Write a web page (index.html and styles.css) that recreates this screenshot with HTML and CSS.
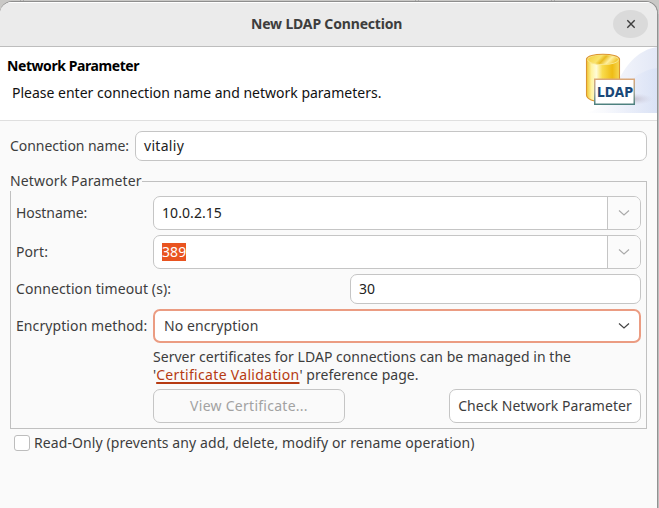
FILE: index.html
```html
<!DOCTYPE html>
<html lang="en">
<head>
<meta charset="utf-8">
<title>New LDAP Connection</title>
<link rel="stylesheet" href="styles.css">
</head>
<body>
<div class="backdrop"><i class="tab-edge tab-edge-a"></i><i class="tab-edge tab-edge-b"></i><i class="tab-edge tab-edge-c"></i></div>
<main class="dialog">
  <header class="titlebar">
    <h1 class="title">New LDAP Connection</h1>
    <button class="close" aria-label="Close"><svg width="10" height="10" viewBox="0 0 10 10"><path d="M1.3 1.3 8.7 8.7M8.7 1.3 1.3 8.7" fill="none" stroke="#3d3d3d" stroke-width="1.4"/></svg></button>
  </header>
  <section class="banner">
    <div class="banner-text">
      <h2>Network Parameter</h2>
      <p>Please enter connection name and network parameters.</p>
    </div>
    <svg class="logo" width="75" height="66" viewBox="0 0 75 66">
      <defs>
        <linearGradient id="sky" x1="0" x2="1"><stop offset="0" stop-color="#fff"/><stop offset="1" stop-color="#e3e8f6"/></linearGradient>
        <linearGradient id="sky2" x1="0" x2="1"><stop offset="0" stop-color="#f8f9fd"/><stop offset="1" stop-color="#d6dff5"/></linearGradient>
        <linearGradient id="gold" x1="0" x2="1"><stop offset="0" stop-color="#efc52f"/><stop offset=".15" stop-color="#fff3a0"/><stop offset=".3" stop-color="#fffbd8"/><stop offset=".48" stop-color="#f9dc4e"/><stop offset=".78" stop-color="#efbc14"/><stop offset="1" stop-color="#f6d957"/></linearGradient>
        <linearGradient id="lid" x1="0" x2="1" y2=".3"><stop offset="0" stop-color="#f3cd35"/><stop offset=".45" stop-color="#f9e36d"/><stop offset=".6" stop-color="#e9bb20"/><stop offset=".8" stop-color="#fff0a0"/><stop offset="1" stop-color="#f2ca3a"/></linearGradient>
        <linearGradient id="frame" y2="1" x2="0"><stop offset="0" stop-color="#dba878"/><stop offset=".5" stop-color="#a8a99a"/><stop offset="1" stop-color="#4d817f"/></linearGradient>
        <radialGradient id="shade"><stop offset="0" stop-color="#a99dab" stop-opacity=".6"/><stop offset="1" stop-color="#c9c5d7" stop-opacity="0"/></radialGradient>
      </defs>
      <path d="M36 34C46 15 57 3 75 0v66H4C20 62 30 51 36 34Z" fill="url(#sky)"/>
      <path d="M22 66C40 40 53 24 75 21v45Z" fill="url(#sky2)" opacity=".7"/>
      <ellipse cx="50" cy="52" rx="21" ry="6" fill="url(#shade)"/>
      <path d="M4.500 12v36c0 4 7 7 16 7s17-3 17-7V12Z" fill="url(#gold)" stroke="#dc9530" stroke-width="1.1"/>
      <ellipse cx="21" cy="12.600" rx="15.600" ry="5" fill="url(#lid)" stroke="#f9e78d"/>
      <path d="M4.500 12.500c0-7 33-7 33 0" fill="none" stroke="#dc9530" stroke-width="1.1"/>
      <rect x="12.750" y="32.250" width="39.500" height="25" fill="#fff" stroke="url(#frame)" stroke-width="1.5"/>
      <text class="logo-text" x="15" y="49.800" textLength="36" lengthAdjust="spacingAndGlyphs">LDAP</text>
    </svg>
  </section>
  <form class="content">
    <div class="name-row"><label class="name-label">Connection name:</label><div class="field name-field">vitaliy</div></div>
    <fieldset class="group">
      <legend>Network Parameter</legend>
      <div class="rows">
        <div class="row"><label class="snug">Hostname:</label><div class="field combo"><span class="value">10.0.2.15</span><span class="drop"><svg width="12" height="8" viewBox="0 0 12 8"><path d="M1 1.5 6 6 11 1.5" fill="none" stroke="#aaa" stroke-width="1.1"/></svg></span></div></div>
        <div class="row"><label>Port:</label><div class="field combo"><span class="value"><span class="selected">389</span></span><span class="drop"><svg width="12" height="8" viewBox="0 0 12 8"><path d="M1 1.5 6 6 11 1.5" fill="none" stroke="#aaa" stroke-width="1.1"/></svg></span></div></div>
        <div class="row timeout"><label>Connection timeout (s):</label><div class="field">30</div></div>
        <div class="row"><label>Encryption method:</label><div class="field select"><span>No encryption</span><svg width="12" height="8" viewBox="0 0 12 8"><path d="M1 1.5 6 6 11 1.5" fill="none" stroke="#444" stroke-width="1.2"/></svg></div></div>
      </div>
      <p class="hint">Server certificates for LDAP connections can be managed in the<br>'<a class="link">Certificate Validation</a>' preference page.</p>
      <div class="actions"><button type="button" class="button disabled">View Certificate...</button><button type="button" class="button">Check Network Parameter</button></div>
    </fieldset>
    <label class="readonly"><span class="checkbox"></span>Read-Only (prevents any add, delete, modify or rename operation)</label>
  </form>
</main>
</body>
</html>
```
FILE: styles.css
```css
* { box-sizing: border-box; }
body { margin: 0; padding-top: 2px; height: 508px; overflow: hidden; background: #bdbdbd; color: #3d3d3d; font: 14px/18px "Noto Sans", sans-serif; position: relative; white-space: nowrap; }
h1, h2, p { margin: 0; font-size: inherit; }
button { font: inherit; color: inherit; padding: 0; }

.backdrop { position: absolute; inset: 0 0 auto 0; height: 14px; background: #c9c8c6; }
.tab-edge { position: absolute; top: 0; width: 4px; height: 2px; border: solid #aaa; border-width: 0 1px; }
.tab-edge-a { left: 20px; }
.tab-edge-b { left: 415px; }
.tab-edge-c { left: 551px; }

.dialog { position: relative; width: 658px; height: 506px; background: #fafafa; border-right: 1px solid #929292; box-shadow: 0 -1px 0 #8e8e8e; border-radius: 12px 12px 0 0; overflow: hidden; }
.titlebar { display: flex; align-items: center; height: 45px; background: #ebebeb; border-top: 1px solid #fff; border-bottom: 1px solid #bdbdbd; }
.title { flex: 1; padding: 0 0 2px 251px; font-weight: 700; letter-spacing: -.17px; }
.close { display: flex; align-items: center; justify-content: center; width: 35px; height: 28px; margin: 0 9px 1px 0; border: 0; border-radius: 50%; background: #dadada; }

.banner { display: flex; justify-content: space-between; height: 74px; background: #fff; border-bottom: 1px solid #dfdfdf; color: #111; }
.banner-text { padding-top: 10px; }
.banner h2 { padding-left: 7px; color: #000; letter-spacing: -.42px; }
.banner p { padding: 9px 0 0 12px; }
.logo-text { font: 700 14px "DejaVu Sans", sans-serif; fill: #194878; }

.content { padding: 10px 10px 0 10px; }
.name-row { display: flex; align-items: center; justify-content: space-between; height: 30px; }
.name-label, .snug { letter-spacing: -.06px; }
.field { display: flex; align-items: center; height: 30px; background: #fff; border: 1px solid #c5c5c5; border-radius: 7px; padding-left: 8px; color: #222; }
.name-field { width: 512px; letter-spacing: .3px; }

.group { position: relative; min-width: 0; height: 257px; margin: 11px 0 0; padding: 0 5px; border: 1px solid #c0c0c0; }
legend { height: 19px; padding: 0; margin-left: -6px; background: #fafafa; letter-spacing: .14px; }
.rows { display: grid; gap: 5px; padding-top: 5px; }
.row { display: flex; align-items: center; justify-content: space-between; }
.row label:not(.snug) { letter-spacing: .09px; }
.row .field { width: 488px; height: 34px; }
.row.timeout .field { width: 291px; height: 30px; }
.combo .value { flex: 1; letter-spacing: .07px; }
.combo .drop { display: flex; align-items: center; justify-content: center; width: 33px; height: 32px; background: #fbfbfb; border-left: 1px solid #c5c5c5; border-radius: 0 6px 6px 0; }
.selected { display: inline-block; width: 24px; height: 18px; background: #e95420; color: #fff; }
.row .select { justify-content: space-between; padding: 0 9px; border: 2px solid #eb9c82; color: #3d3d3d; letter-spacing: .08px; }

.hint { margin: 5px 0 0 137px; height: 37px; letter-spacing: .03px; }
.link { color: #b63a12; letter-spacing: .32px; text-decoration: underline 2px; text-underline-offset: 2px; text-decoration-skip-ink: none; }
.actions { display: flex; justify-content: space-between; margin: 4px 0 0 137px; }
.button { width: 192px; height: 34px; border: 1px solid #c5c5c5; border-radius: 7px; background: #fff; letter-spacing: .04px; }
.disabled { background: #fafafa; color: #a2a2a2; letter-spacing: .27px; }
.readonly { display: flex; align-items: center; height: 18px; margin-top: 5px; padding-left: 4px; letter-spacing: .09px; }
.checkbox { width: 16px; height: 16px; margin-right: 4px; border: 1px solid #bdbdbd; border-radius: 3px; background: #fff; }
```
